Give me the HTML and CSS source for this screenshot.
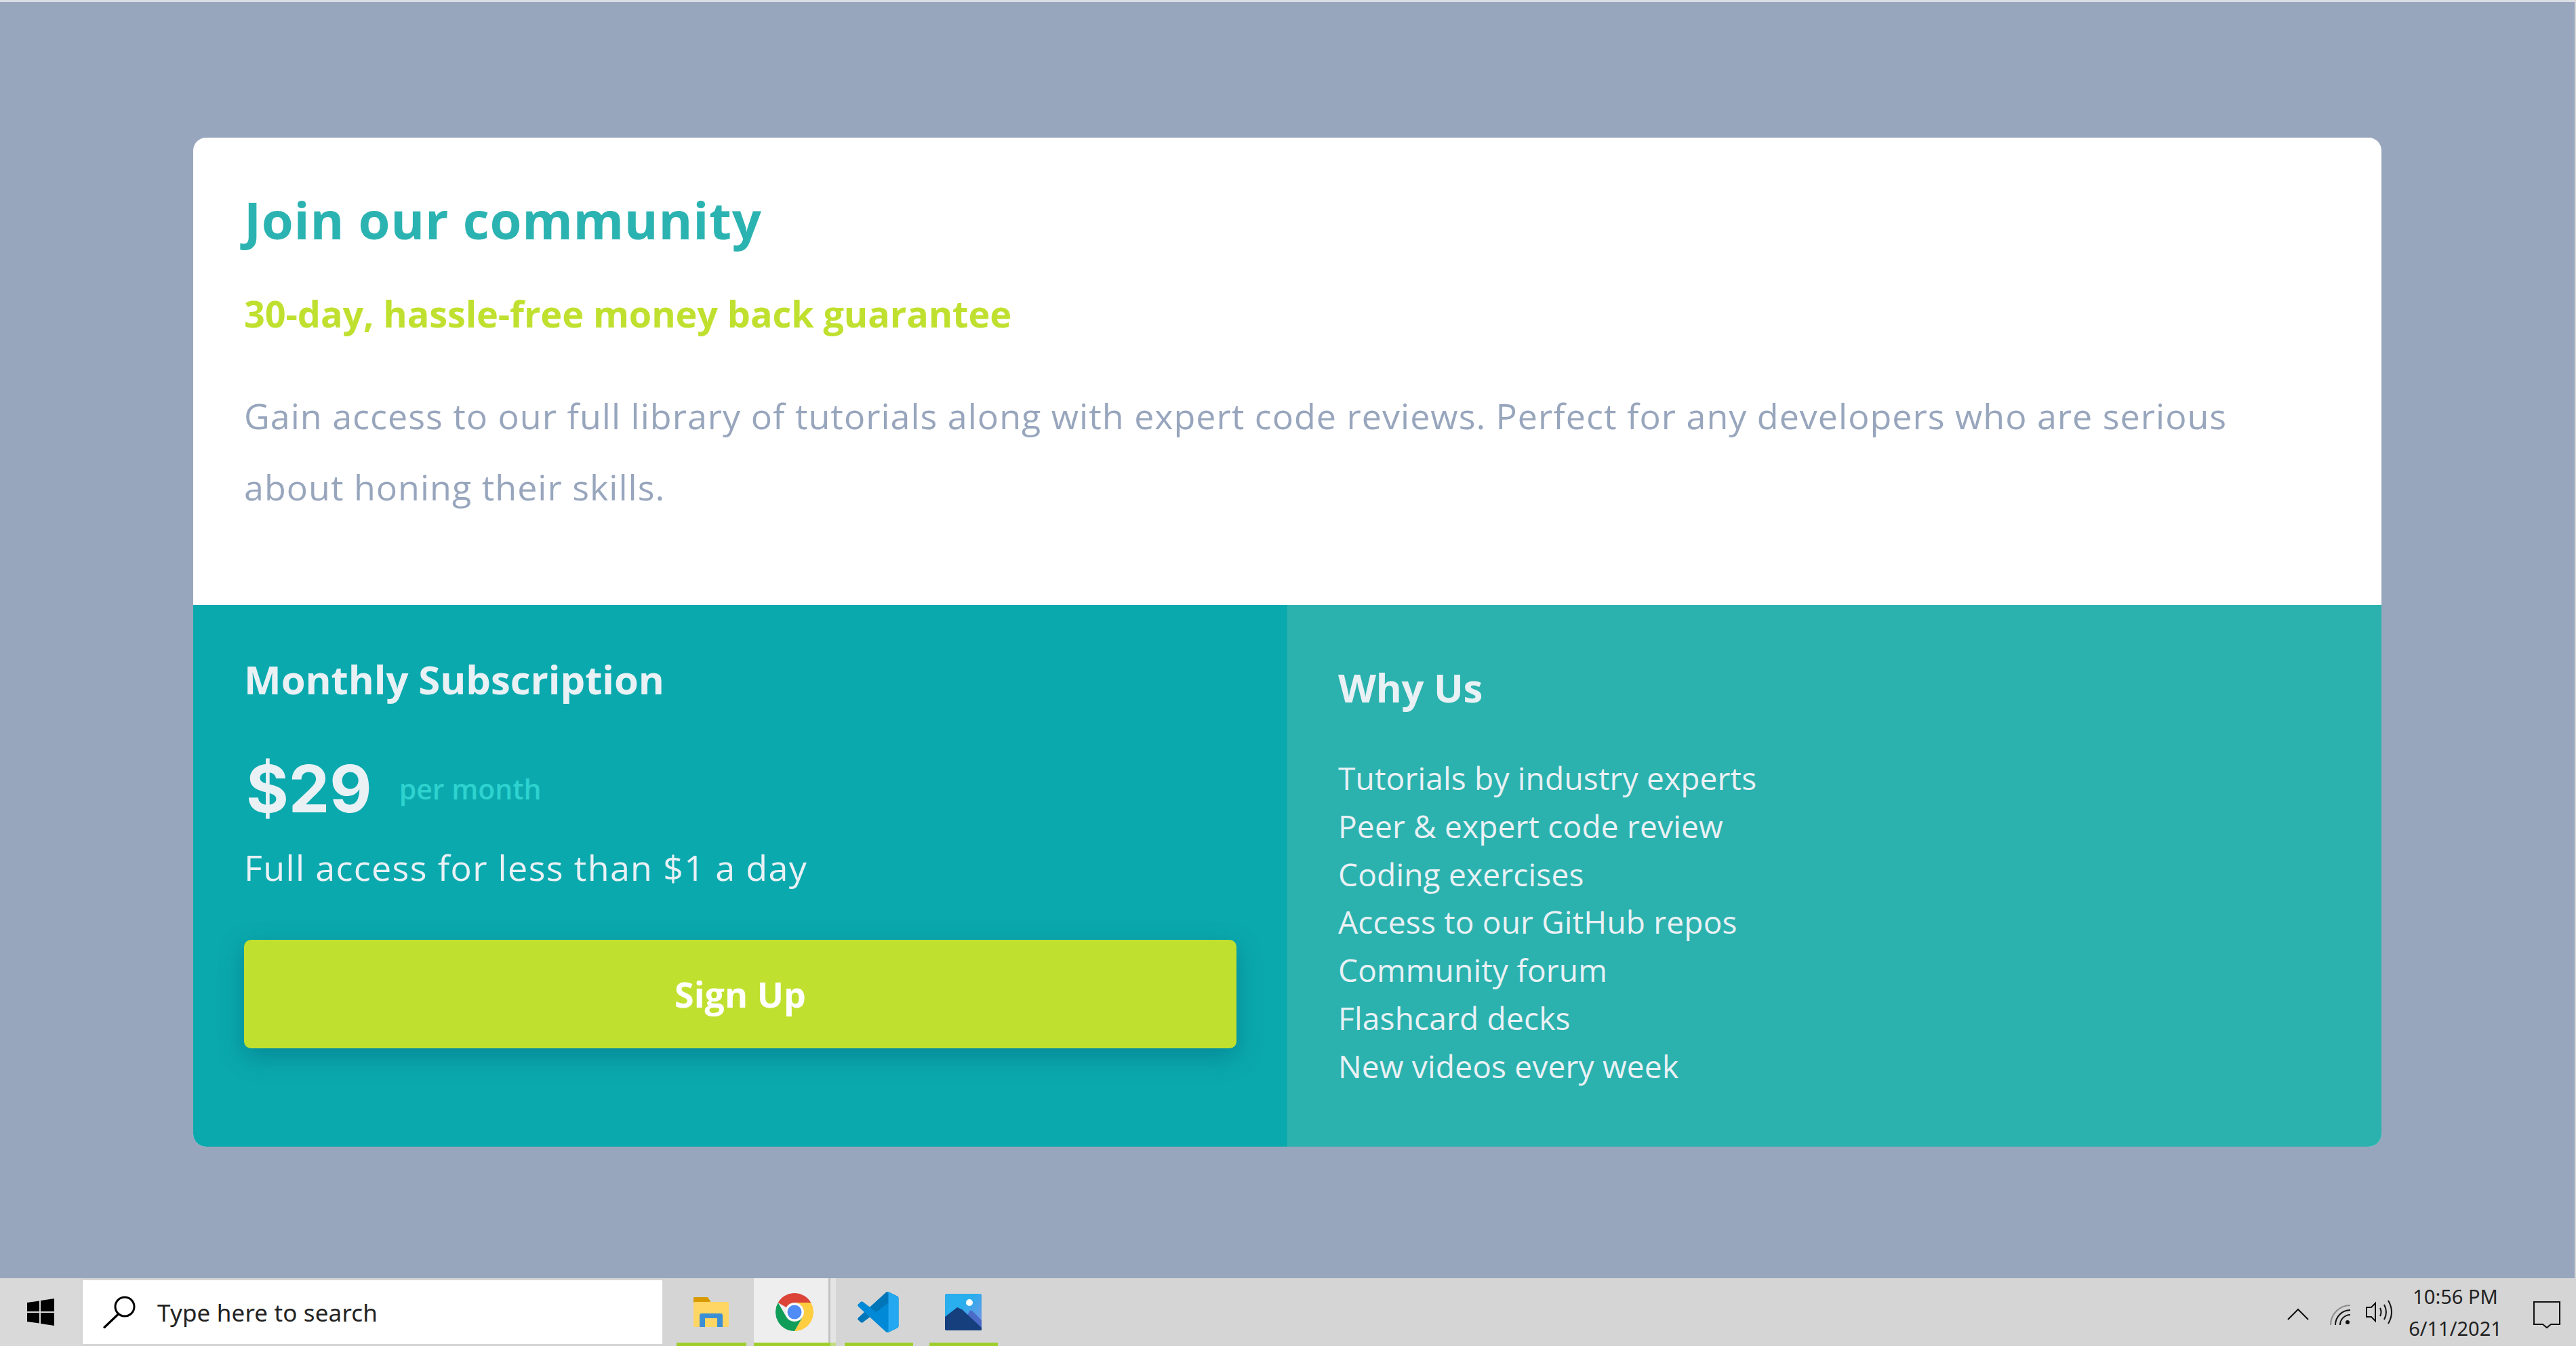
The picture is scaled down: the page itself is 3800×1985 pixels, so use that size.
FILE: index.html
```html
<!DOCTYPE html>
<html lang="en">
<head>
<meta charset="utf-8">
<title>Join our community</title>
<link rel="stylesheet" href="styles.css">
</head>
<body>
<main class="page">
  <section class="card">
    <div class="intro">
      <h1 class="title">Join our community</h1>
      <h2 class="guarantee">30-day, hassle-free money back guarantee</h2>
      <p class="lede">Gain access to our full library of tutorials along with expert code reviews. Perfect for any developers who are serious about honing their skills.</p>
    </div>
    <div class="panels">
      <div class="subscription">
        <h3 class="plan">Monthly Subscription</h3>
        <div class="price-row"><span class="price">$29</span><span class="period">per month</span></div>
        <p class="access">Full access for less than $1 a day</p>
        <button class="signup">Sign Up</button>
      </div>
      <div class="why">
        <h3 class="why-title">Why Us</h3>
        <ul class="reasons">
          <li>Tutorials by industry experts</li>
          <li>Peer &amp; expert code review</li>
          <li>Coding exercises</li>
          <li>Access to our GitHub repos</li>
          <li>Community forum</li>
          <li>Flashcard decks</li>
          <li>New videos every week</li>
        </ul>
      </div>
    </div>
  </section>
</main>
<footer class="taskbar">
  <div class="start">
    <svg class="win-icon" viewBox="0 0 40 40"><path fill="#000" d="M0 6l18-2.600V19H0zM20 3.100L40 0v19H20zM0 21h18v15.600L0 34zM20 21h20v19l-20-3.100z"/></svg>
  </div>
  <div class="search">
    <svg class="search-icon" viewBox="0 0 48 48"><circle cx="32" cy="16" r="14" fill="none" stroke="#000" stroke-width="3"/><path d="M22.500 27L2 46.500" stroke="#000" stroke-width="3.200" stroke-linecap="round" fill="none"/></svg>
    <span class="search-text">Type here to search</span>
  </div>
  <div class="apps">
    <div class="app app-first">
      <svg class="folder-icon" viewBox="0 0 52 44"><path fill="#d99a00" d="M1 0h20l4 6-4 7H0V1z"/><rect y="7" width="52" height="37" rx="2" fill="#ffd563"/><path fill="#3c8fd4" d="M9 44V27q0-3 3-3h28q3 0 3 3v17h-8V31H17v13z"/></svg>
    </div>
    <div class="app app-active">
      <svg class="chrome-icon" viewBox="0 0 48 48"><path fill="#db4437" d="M3.200 12A24 24 0 0 1 44.800 12H24a12 12 0 0 0-10.400 6z"/><path fill="#ffcd40" d="M44.800 12A24 24 0 0 1 24 48L34.400 30A12 12 0 0 0 24 12z"/><path fill="#0f9d58" d="M3.200 12L13.600 30A12 12 0 0 0 34.400 30L24 48A24 24 0 0 1 3.200 12z"/><circle cx="24" cy="24" r="11" fill="#fff"/><circle cx="24" cy="24" r="9" fill="#4f8cf5"/></svg>
    </div>
    <div class="app">
      <svg class="code-icon" viewBox="0 0 100 100"><path fill="#0089d6" d="M70.912 99.317C72.487 99.931 74.283 99.891 75.873 99.126L96.461 89.220C98.624 88.179 100 85.989 100 83.587V16.413C100 14.011 98.624 11.822 96.461 10.781L75.873.874C73.786-.130 71.345.116 69.514 1.447C69.252 1.637 69.003 1.849 68.769 2.083L29.355 38.042L12.187 25.010C10.589 23.797 8.354 23.896 6.869 25.246L1.363 30.255C-.453 31.906-.455 34.763 1.359 36.417L16.247 50L1.359 63.583C-.455 65.237-.453 68.094 1.363 69.745L6.869 74.754C8.354 76.104 10.589 76.204 12.187 74.991L29.355 61.959L68.769 97.917C69.393 98.541 70.125 99.010 70.912 99.317ZM75.015 27.299L45.109 50L75.015 72.701V27.299Z"/><path fill="#0076b8" d="M96.461 10.796L75.857.876C73.472-.273 70.622.212 68.750 2.083L1.299 63.583C-.516 65.237-.514 68.094 1.303 69.745L6.813 74.754C8.298 76.104 10.535 76.204 12.134 74.990L93.361 13.370C96.086 11.303 100 13.246 100 16.667V16.428C100 14.027 98.625 11.838 96.461 10.796Z"/><path fill="#0089d6" d="M96.461 89.204L75.857 99.124C73.472 100.273 70.622 99.788 68.750 97.917L1.299 36.417C-.516 34.763-.514 31.906 1.303 30.255L6.813 25.246C8.298 23.896 10.535 23.796 12.134 25.010L93.361 86.630C96.086 88.697 100 86.754 100 83.333V83.572C100 85.973 98.625 88.162 96.461 89.204Z"/><path fill="#24a8f0" d="M75.858 99.126C73.472 100.274 70.622 99.789 68.750 97.917C71.056 100.223 75 98.590 75 95.328V4.672C75 1.410 71.056-.223 68.750 2.083C70.622.211 73.472-.274 75.858.874L96.459 10.781C98.623 11.822 100 14.011 100 16.413V83.587C100 85.989 98.623 88.179 96.459 89.220Z"/></svg>
    </div>
    <div class="app">
      <svg class="photo-icon" viewBox="0 0 54 54"><defs><linearGradient id="sky" x1="0" y1="0" x2="1" y2="1"><stop offset=".4" stop-color="#29aeee"/><stop offset="1" stop-color="#8a8fe0"/></linearGradient></defs><rect width="54" height="54" rx="2" fill="url(#sky)"/><ellipse cx="36" cy="13" rx="5" ry="5" fill="#fff"/><path fill="#4a6cc8" d="M27 44l9-18q2-2 4-1l14 14v15H27z"/><path fill="#153f7d" d="M0 34L18 20l7 3 29 27v2q0 2-2 2H2q-2 0-2-2z"/></svg>
    </div>
  </div>
  <div class="tray">
    <svg class="chevron-icon" viewBox="0 0 32 18"><path d="M1 17L16 2l15 15" fill="none" stroke="#111" stroke-width="2"/></svg>
    <svg class="wifi-icon" viewBox="0 0 30 30"><path d="M1 30A29 29 0 0 1 30 1" fill="none" stroke="#8a8a8a" stroke-width="2"/><path d="M8 30A22 22 0 0 1 30 8M15 30A15 15 0 0 1 30 15" fill="none" stroke="#111" stroke-width="2"/><circle cx="26" cy="26" r="3" fill="#111"/></svg>
    <svg class="speaker-icon" viewBox="0 0 41 36"><path d="M1 11h7L14 5v26l-6-6H1zM21 12q3 6 0 12M27 7q6 11 0 22M33 1q10 17 0 34" fill="none" stroke="#111" stroke-width="2"/></svg>
    <div class="clock"><span>10:56 PM</span><span>6/11/2021</span></div>
    <svg class="note-icon" viewBox="0 0 40 40"><path d="M1 1h38v33H26l-6 5-6-5H1z" fill="none" stroke="#111" stroke-width="2"/></svg>
  </div>
</footer>
</body>
</html>
```

FILE: styles.css
```css
* { box-sizing: border-box; }
html, body { margin: 0; height: 100%; }
body {
  display: flex;
  flex-direction: column;
  height: 1985px;
  background: #d6d6d6;
  font-family: "Open Sans", "Liberation Sans", sans-serif;
  overflow: hidden;
}
.page {
  flex: 1;
  margin-right: 2px;
  border-top: 3px solid #d9dde3;
  background: #98a6bd;
  padding: 200px 285px 0;
}
.card {
  width: 3228px;
  border-radius: 19px;
  overflow: hidden;
  background: #fff;
}
.intro { height: 689px; padding: 71px 75px 0; }
.title {
  margin: 0;
  font-size: 76px;
  line-height: 100px;
  font-weight: 700;
  letter-spacing: .7px;
  color: #2bb3b1;
}
.guarantee {
  margin: 53px 0 0;
  font-size: 54px;
  line-height: 70px;
  font-weight: 700;
  letter-spacing: -.1px;
  color: #c0e030;
}
.lede {
  margin: 63px 40px 0 0;
  font-size: 52px;
  line-height: 105px;
  color: #98a6bd;
  font-weight: 400;
  letter-spacing: 1px;
}
.panels { display: grid; grid-template-columns: 1fr 1fr; height: 799px; color: #e9f1f5; }
.subscription { background: #0aa9ae; padding: 70px 75px 0; }
.why { background: #2cb2ae; padding: 82px 75px 0; }
.plan, .why-title { margin: 0; font-size: 58px; line-height: 80px; font-weight: 700; letter-spacing: -.05px; }
.why-title { letter-spacing: -.3px; }
.price-row { display: flex; align-items: center; margin-top: 66px; height: 110px; }
.price { font-family: Inter, "Open Sans", sans-serif; font-size: 96px; font-weight: 700; line-height: 110px; margin-right: 40px; padding-left: 3px; }
.period { font-size: 41px; font-weight: 600; color: #2ed2cf; }
.access { margin: 26px 0 0; font-size: 52px; line-height: 70px; letter-spacing: 1.35px; }
.signup {
  display: block;
  width: 100%;
  height: 160px;
  margin-top: 72px;
  padding-bottom: 3px;
  border: 0;
  border-radius: 10px;
  background: #c0e030;
  color: #fff;
  font: 700 52px "Open Sans", sans-serif;
  box-shadow: 0 12px 36px rgba(0, 85, 110, .4);
}
.reasons { list-style: none; margin: 58px 0 0; padding: 0; font-size: 46px; line-height: 70.8px; letter-spacing: .2px; }
.taskbar { display: flex; height: 100px; flex: none; background: #d5d5d5; }
.start { width: 119px; display: flex; align-items: center; padding-left: 40px; background: #d9d9d9; }
.win-icon { width: 40px; height: 40px; }
.search {
  width: 855px;
  height: 94px;
  margin: 3px 0 3px 3px;
  padding-left: 30px;
  display: flex;
  align-items: center;
  background: #fff;
}
.search-icon { width: 48px; height: 48px; margin-right: 32px; }
.search-text { font-family: "Noto Sans", sans-serif; font-size: 35px; color: #222; letter-spacing: .15px; }
.apps { display: flex; margin-left: 8px; }
.app { width: 125px; height: 100px; display: flex; align-items: center; justify-content: center; position: relative; }
.app::after {
  content: "";
  position: absolute;
  left: 13px;
  right: 11px;
  bottom: 0;
  height: 5px;
  background: #9fce2c;
}
.app-first { width: 127px; }
.app-active { width: 121px; background: linear-gradient(90deg, #eeeeee 0 110px, #c2c2c2 110px 113px, #e4e4e4 113px); }
.app-active::after { left: 0; right: 0; background: linear-gradient(90deg, #9fce2c 0 113px, #c4dc80 113px); }
.folder-icon { width: 52px; height: 44px; }
.chrome-icon { width: 56px; height: 56px; margin-right: 2px; }
.code-icon { width: 61px; height: 60px; }
.photo-icon { width: 54px; height: 54px; }
.tray { margin-left: auto; display: flex; align-items: center; padding-right: 23px; }
.chevron-icon { width: 32px; height: 18px; margin-top: 6px; }
.wifi-icon { width: 30px; height: 30px; margin-left: 31px; margin-top: 8px; }
.speaker-icon { width: 41px; height: 36px; margin-left: 23px; }
.clock {
  display: flex;
  flex-direction: column;
  align-items: center;
  width: 134px;
  margin-left: 24px;
  font-size: 29px;
  line-height: 47px;
  color: #222;
  font-family: "Noto Sans", sans-serif;
}
.note-icon { width: 40px; height: 40px; margin-left: 48px; margin-top: 8px; }
```
